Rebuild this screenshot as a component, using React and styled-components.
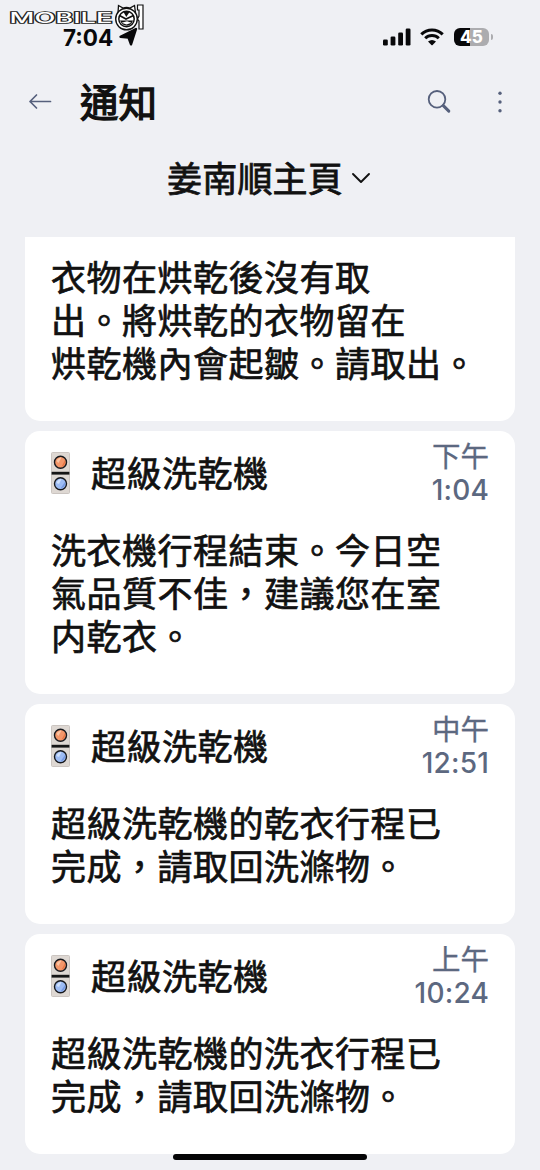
import React from 'react'
import styled, { createGlobalStyle } from 'styled-components'

const notifications = [
  {
    id: 1,
    lines: ['衣物在烘乾後沒有取', '出。將烘乾的衣物留在', '烘乾機內會起皺。請取出。'],
  },
  {
    id: 2,
    device: '超級洗乾機',
    period: '下午',
    time: '1:04',
    lines: ['洗衣機行程結束。今日空', '氣品質不佳，建議您在室', '内乾衣。'],
  },
  {
    id: 3,
    device: '超級洗乾機',
    period: '中午',
    time: '12:51',
    lines: ['超級洗乾機的乾衣行程已', '完成，請取回洗滌物。'],
  },
  {
    id: 4,
    device: '超級洗乾機',
    period: '上午',
    time: '10:24',
    lines: ['超級洗乾機的洗衣行程已', '完成，請取回洗滌物。'],
  },
]

const Watermark = () => (
  <WatermarkSvg width="150" height="36" viewBox="0 0 150 36">
    <text
      x="9.500"
      y="23.200"
      textLength="103"
      lengthAdjust="spacingAndGlyphs"
      fontFamily="Inter, sans-serif"
      fontSize="14"
      fontWeight="500"
      fill="#fff"
      stroke="#222"
      strokeWidth="1.7"
      paintOrder="stroke"
    >
      MOBILE
    </text>
    <path d="M137.500 5 H143 V29 H139 V21 L137.500 19 L139 16 V10 H137.500 Z" fill="#fff" stroke="#111" strokeWidth="1.200" />
    <path d="M118 13 L118.500 5.500 L123 8 Q126.500 7 130 8 L134.500 5.500 L135.500 13" fill="#fff" stroke="#111" strokeWidth="1.300" />
    <circle cx="126.500" cy="19" r="10.800" fill="#fff" stroke="#111" strokeWidth="1.400" />
    <circle cx="126.500" cy="19" r="7.700" fill="#fff" stroke="#111" strokeWidth="1.500" />
    <path d="M119.500 15.500 L126 19 L133.500 15.500" fill="none" stroke="#111" strokeWidth="1.600" />
    <path d="M123.500 12 L126.300 17 L129.500 12" fill="#111" />
    <path d="M120 20.500 L133 20.500 Q131.500 25.500 127 25.700 Q122 25.700 120 20.500 Z" fill="#111" />
    <path d="M121.500 22.700 L127 21.300 L131.500 22.700 L126.500 24.600 Z" fill="#fff" />
  </WatermarkSvg>
)

const StatusBar = () => (
  <StatusWrapper>
    <div className="clock">
      7:04
      <svg width="20" height="20" viewBox="0 0 20 20">
        <path
          d="M18 2 L13 17.300 L10.500 10.500 L2.500 9.700 Z"
          fill="#08080a"
          stroke="#08080a"
          strokeWidth="2.4"
          strokeLinejoin="round"
        />
      </svg>
    </div>
    <div className="indicators">
      <svg className="signal" width="28" height="18" viewBox="0 0 28 18">
        <rect x="0" y="11.500" width="4.800" height="6" rx="1.300" />
        <rect x="7.600" y="8.500" width="4.800" height="9" rx="1.300" />
        <rect x="15.200" y="4.500" width="4.800" height="13" rx="1.300" />
        <rect x="22.700" y="0.500" width="4.800" height="17" rx="1.300" />
      </svg>
      <svg className="wifi" width="24" height="18" viewBox="0 0 24 18">
        <path d="M1.300 6.300 A15.400 15.400 0 0 1 22.700 6.300" fill="none" stroke="#08080a" strokeWidth="3.100" />
        <path d="M5.200 10.300 A9.700 9.700 0 0 1 18.800 10.300" fill="none" stroke="#08080a" strokeWidth="3" />
        <path d="M8 13.600 Q12 10.300 16 13.600 L12.600 17 Q12 17.500 11.400 17 Z" />
      </svg>
      <Battery>
        <span className="level">45</span>
        <span className="cap" />
      </Battery>
    </div>
  </StatusWrapper>
)

const WasherIcon = () => (
  <svg width="19" height="42" viewBox="0 0 19 42">
    <rect x="0.500" y="0.500" width="18" height="20" rx="1" fill="#ded8d3" stroke="#cbc5c1" />
    <rect x="0.500" y="21.500" width="18" height="20" rx="1" fill="#ded8d3" stroke="#cbc5c1" />
    <rect x="0.500" y="19.800" width="18" height="2.800" fill="#151515" />
    <circle cx="9.500" cy="10.200" r="6" fill="#f4976a" stroke="#16181d" strokeWidth="1.400" />
    <path d="M5.500 9 Q7 5.500 10.500 5.500 L7.500 11 Z" fill="#fbc3a2" />
    <path d="M14 8 Q15 13 10.500 15 Z" fill="#e97443" />
    <circle cx="9.500" cy="31.700" r="6" fill="#9dbcf4" stroke="#16181d" strokeWidth="1.400" />
    <path d="M5.500 31 Q7 27 10.500 27 L8 32 Z" fill="#cfe0fc" />
    <path d="M14 30 Q15 35 9.500 36.500 Z" fill="#7598e2" />
  </svg>
)

const Notification = ({ device, period, time, lines }) => (
  <Card $clipped={!device}>
    {device && (
      <CardHead>
        <WasherIcon />
        <h3>{device}</h3>
        <Time>
          <span className="period">{period}</span>
          <span>{time}</span>
        </Time>
      </CardHead>
    )}
    <Message>
      {lines.map((line) => (
        <span key={line}>{line}</span>
      ))}
    </Message>
  </Card>
)

const App = () => {
  return (
    <>
      <GlobalStyle />
      <Screen>
        <Watermark />
        <StatusBar />
        <Header>
          <button type="button" className="back-btn">
            <svg width="24" height="18" viewBox="0 0 24 18">
              <path d="M22.500 8.500 H2 M8.500 2 L2 8.500 L8.500 15" />
            </svg>
          </button>
          <h1>通知</h1>
          <button type="button" className="search-btn">
            <svg width="26" height="26" viewBox="0 0 26 26">
              <circle cx="11" cy="10.300" r="8.300" strokeWidth="1.800" />
              <path d="M17.300 16.600 L22.800 22.100" strokeWidth="3" />
            </svg>
          </button>
          <button type="button" className="more-btn">
            <svg width="6" height="24" viewBox="0 0 6 24">
              <circle cx="3" cy="3.200" r="1.700" />
              <circle cx="3" cy="12" r="1.700" />
              <circle cx="3" cy="20.800" r="1.700" />
            </svg>
          </button>
        </Header>
        <HomePicker>
          姜南順主頁
          <svg width="20" height="14" viewBox="0 0 20 14">
            <path d="M2 3 L10 11 L18 3" fill="none" stroke="#111" strokeWidth="1.900" strokeLinecap="round" strokeLinejoin="round" />
          </svg>
        </HomePicker>
        <List>
          {notifications.map((item) => (
            <Notification key={item.id} {...item} />
          ))}
        </List>
        <HomeIndicator />
      </Screen>
    </>
  )
}

const GlobalStyle = createGlobalStyle`
  *{
    box-sizing:border-box;
    margin:0;
    padding:0;
  }
  body{
    background-color:#eff0f4;
  }
  svg{
    display:block;
    flex-shrink:0;
  }
  button{
    border:none;
    background:none;
  }
`

const Screen = styled.div`
  position:relative;
  width:540px;
  height:1170px;
  overflow:hidden;
  background-color:#eff0f4;
  color:#111;
  font-family:"Noto Sans CJK TC", sans-serif;
  font-weight:400;
`

const WatermarkSvg = styled.svg`
  position:absolute;
  top:0;
  left:0;
  z-index:2;
`

const StatusWrapper = styled.div`
  height:64px;
  display:flex;
  justify-content:space-between;
  align-items:center;
  padding:10px 47px 0 63px;
  font-family:Inter, sans-serif;

  .clock{
    display:flex;
    align-items:center;
    gap:5px;
    font-size:22.5px;
    font-weight:700;
    color:#08080a;
  }
  .indicators{
    display:flex;
    align-items:center;
    fill:#08080a;
  }
  .wifi{
    margin:0 10px 0 9px;
  }
`

const Battery = styled.div`
  display:flex;
  align-items:center;
  gap:2px;

  .level{
    width:35px;
    height:18px;
    border-radius:6px;
    background:linear-gradient(90deg, #08080a 45%, #acacaf 45%);
    color:#fff;
    font-size:17px;
    font-weight:800;
    line-height:18px;
    text-align:center;
  }
  .cap{
    width:2px;
    height:6px;
    border-radius:0 2px 2px 0;
    background-color:#acacaf;
  }
`

const Header = styled.header`
  height:76px;
  display:flex;
  align-items:center;
  padding:0 37px 0 28px;

  button{
    fill:none;
    stroke:#56607c;
    stroke-width:1.7;
    stroke-linecap:round;
    stroke-linejoin:round;
  }
  h1{
    flex:1;
    margin-left:28px;
    padding-bottom:4px;
    font-size:38.5px;
    font-weight:400;
    line-height:48px;
    -webkit-text-stroke:1.3px #111;
  }
  .search-btn{
    margin-right:45px;
  }
  .more-btn{
    fill:#56607c;
    stroke:none;
  }
`

const HomePicker = styled.div`
  height:97px;
  display:flex;
  align-items:flex-start;
  justify-content:center;
  padding:15px 2px 0 0;
  gap:8px;
  font-size:35px;
  line-height:44px;
  letter-spacing:0.2px;
  -webkit-text-stroke:0.8px #111;

  svg{
    margin-top:16px;
  }
`

const List = styled.main`
  display:flex;
  flex-direction:column;
  gap:10px;
  padding:0 25px;
`

const Card = styled.article`
  padding:${({ $clipped }) => ($clipped ? '20px' : '0')} 26px 35px;
  border-radius:${({ $clipped }) => ($clipped ? '0 0 15px 15px' : '15px')};
  background-color:#fff;
`

const CardHead = styled.div`
  height:99px;
  display:flex;
  align-items:flex-start;

  > svg{
    margin-top:21px;
  }
  h3{
    flex:1;
    margin:19px 0 0 21px;
    font-size:35px;
    font-weight:400;
    line-height:44px;
    letter-spacing:0.5px;
    -webkit-text-stroke:0.7px #111;
  }
`

const Time = styled.div`
  display:flex;
  flex-direction:column;
  align-items:flex-end;
  padding-top:8px;
  color:#5c6880;
  font-family:Inter, sans-serif;
  font-size:28px;
  font-weight:500;
  line-height:34px;
  letter-spacing:0.2px;

  .period{
    font-family:"Liberation Sans", "Noto Sans CJK TC", sans-serif;
    font-size:28.5px;
    font-weight:400;
    line-height:36px;
    margin-bottom:-2px;
    letter-spacing:0;
    -webkit-text-stroke:0.3px #5c6880;
  }
`

/* Liberation Sans comes first to keep the inline boxes within the 43px rows */
const Message = styled.p`
  display:flex;
  flex-direction:column;
  font-family:"Liberation Sans", "Noto Sans CJK TC", sans-serif;
  font-size:35px;
  line-height:43px;
  letter-spacing:0.5px;
  white-space:nowrap;
  -webkit-text-stroke:0.7px #111;
`

const HomeIndicator = styled.div`
  position:absolute;
  left:173px;
  bottom:10px;
  width:194px;
  height:6px;
  border-radius:3px;
  background-color:#050506;
`

export default App
